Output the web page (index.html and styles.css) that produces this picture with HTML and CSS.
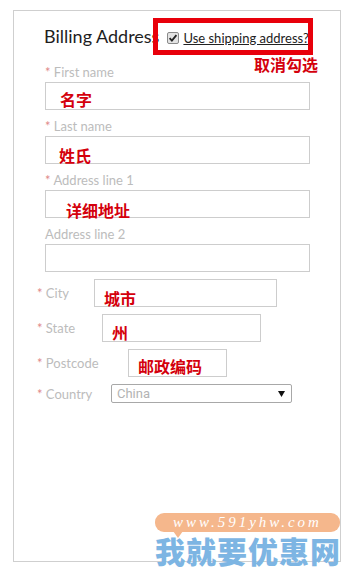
FILE: index.html
```html
<!DOCTYPE html>
<html lang="en">
<head>
<meta charset="utf-8">
<title>Billing Address</title>
<link rel="stylesheet" href="styles.css">
</head>
<body>
<div class="card">
  <div class="head">
    <h2 class="title">Billing Address</h2>
    <span class="ship">
      <span class="cb"><svg width="12" height="12" viewBox="0 0 12 12"><rect x="0.5" y="0.5" width="11" height="11" rx="1.5" fill="#e3e3e3" stroke="#8a8a8a"/><path d="M2.6 6.2 L4.9 8.6 L9.4 3.2" fill="none" stroke="#222" stroke-width="1.8"/></svg></span><span class="ship-text">Use shipping address?</span>
    </span>
  </div>

  <div class="fields">
    <div class="field">
      <div class="lbl"><span class="req">*</span> First name</div>
      <div class="box"><span class="note n1">名字</span></div>
    </div>
    <div class="field">
      <div class="lbl"><span class="req">*</span> Last name</div>
      <div class="box"><span class="note n2">姓氏</span></div>
    </div>
    <div class="field">
      <div class="lbl"><span class="req">*</span> Address line 1</div>
      <div class="box"><span class="note n3">详细地址</span></div>
    </div>
    <div class="field last">
      <div class="lbl">Address line 2</div>
      <div class="box"></div>
    </div>
  </div>

  <div class="rows">
    <div class="row">
      <div class="lbl rl w-city"><span class="req">*</span> City</div>
      <div class="box b-city"><span class="note n4">城市</span></div>
    </div>
    <div class="row">
      <div class="lbl rl w-state"><span class="req">*</span> State</div>
      <div class="box b-state"><span class="note n5">州</span></div>
    </div>
    <div class="row">
      <div class="lbl rl w-post"><span class="req">*</span> Postcode</div>
      <div class="box b-post"><span class="note n6">邮政编码</span></div>
    </div>
    <div class="row row-sel">
      <div class="lbl rl w-country"><span class="req">*</span> Country</div>
      <div class="select"><span class="sel-val">China</span><svg class="arrow" width="7" height="6" viewBox="0 0 7 6"><path d="M0 0 H7 L3.5 6 Z" fill="#111"/></svg></div>
    </div>
  </div>

  <div class="mark"></div>
  <div class="tip">取消勾选</div>
</div>

<div class="wm">
  <div class="pill">www.591yhw.com</div>
  <div class="tail"></div>
  <div class="wm-cn">我就要优惠网</div>
</div>
</body>
</html>
```

FILE: styles.css
```css
html, body {
  margin: 0;
  padding: 0;
  background: #fff;
}

body {
  position: relative;
  width: 354px;
  height: 576px;
  overflow: hidden;
  font-family: Lato, "Noto Sans", sans-serif;
}

.card {
  position: relative;
  box-sizing: border-box;
  margin: 10px 0 0 13px;
  width: 328px;
  height: 552px;
  border: 1px solid #cfcfcf;
}

.head {
  display: flex;
  align-items: baseline;
  padding: 14px 0 0 30px;
  height: 22px;
}

.title {
  margin: 0;
  font-size: 18px;
  font-weight: 400;
  line-height: 22px;
  color: #1e1e1e;
  white-space: nowrap;
}

.ship {
  margin-left: 8px;
  font-size: 13px;
  line-height: 16px;
  color: #222;
  white-space: nowrap;
}

.cb {
  display: inline-block;
  width: 12px;
  height: 12px;
  margin-right: 4px;
  vertical-align: -1px;
}

.cb svg {
  display: block;
}

.ship-text {
  text-decoration: underline;
}

.fields {
  margin-top: 17px;
  padding-left: 31px;
}

.lbl {
  font-size: 13px;
  line-height: 16px;
  color: #bcbcbc;
  white-space: nowrap;
}

.req {
  color: #e0898b;
}

.field .lbl {
  margin-bottom: 2px;
}

.field {
  margin-bottom: 8px;
}

.field.last {
  margin-bottom: 7px;
}

.box {
  position: relative;
  box-sizing: border-box;
  width: 265px;
  height: 28px;
  border: 1px solid #cdcdcd;
  background: #fff;
}

.note {
  position: absolute;
  font-family: "Noto Sans CJK SC", sans-serif;
  font-weight: 700;
  font-size: 16px;
  line-height: 16px;
  color: #d4000c;
  white-space: nowrap;
}

.n1 { top: 8px; left: 14px; }
.n2 { top: 10px; left: 13px; }
.n3 { top: 11px; left: 20px; }
.n4 { top: 10px; left: 9px; }
.n5 { top: 9px; left: 9px; }
.n6 { top: 8px; left: 9px; }

.rows {
  padding-left: 23px;
}

.row {
  display: flex;
  align-items: center;
  height: 28px;
  margin-bottom: 7px;
}

.row-sel {
  height: 19px;
}

.w-city { width: 57px; }
.w-state { width: 65px; }
.w-post { width: 91px; }
.w-country { width: 74px; }

.b-city { width: 183px; }
.b-state { width: 159px; }
.b-post { width: 99px; }

.select {
  box-sizing: border-box;
  display: flex;
  align-items: center;
  justify-content: space-between;
  width: 181px;
  height: 19px;
  padding: 0 6px 0 5px;
  border: 1px solid #a8a8a8;
  border-radius: 2px;
  font-family: Roboto, "Liberation Sans", sans-serif;
  font-size: 13px;
  color: #b3b3b3;
}

.arrow {
  display: block;
}

.mark {
  position: absolute;
  left: 139px;
  top: 7px;
  width: 160px;
  height: 37px;
  box-sizing: border-box;
  border: 5px solid #e8000b;
}

.tip {
  position: absolute;
  left: 240px;
  top: 45px;
  font-family: "Noto Sans CJK SC", sans-serif;
  font-weight: 700;
  font-size: 16px;
  line-height: 17px;
  letter-spacing: 0;
  color: #d4000c;
  white-space: nowrap;
}

.wm {
  position: absolute;
  left: 155px;
  top: 513px;
  width: 185px;
}

.pill {
  height: 19px;
  border-radius: 9px;
  background: #f5b78c;
  color: #fff;
  font-family: "Liberation Serif", serif;
  font-style: italic;
  font-size: 15px;
  line-height: 19px;
  letter-spacing: 3px;
  text-align: center;
}

.tail {
  position: absolute;
  left: 18px;
  top: 18px;
  width: 0;
  height: 0;
  border-left: 5px solid transparent;
  border-right: 5px solid transparent;
  border-top: 7px solid #f5b78c;
}

.wm-cn {
  margin-top: 3px;
  font-family: "Noto Sans CJK SC", sans-serif;
  font-weight: 900;
  font-size: 30px;
  line-height: 30px;
  letter-spacing: 1px;
  color: #7db5e3;
  white-space: nowrap;
}
```
